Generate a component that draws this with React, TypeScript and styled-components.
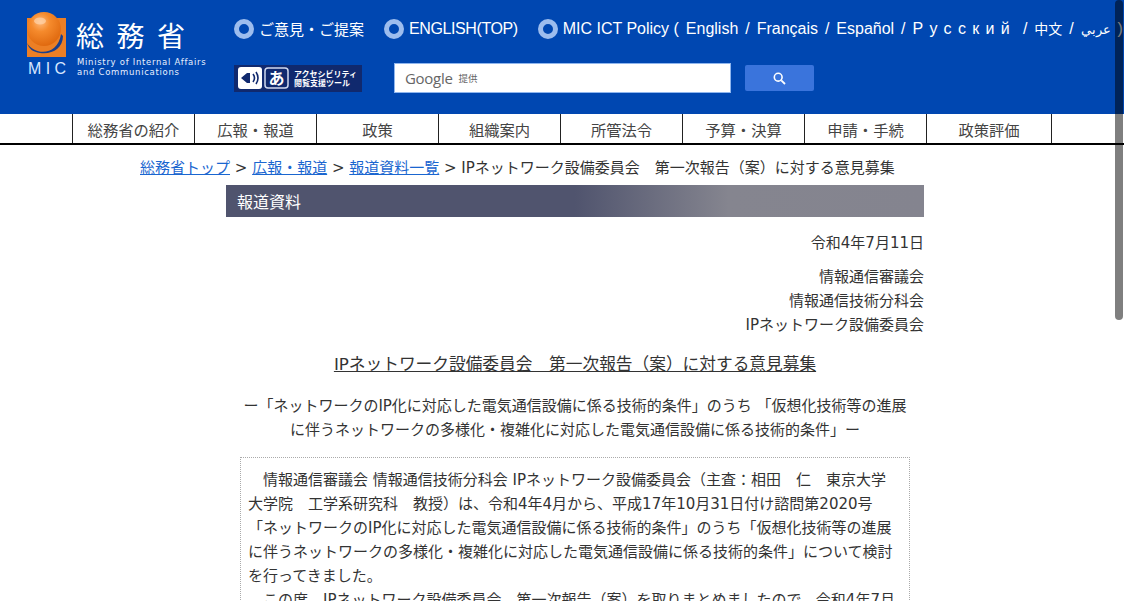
import styled, { createGlobalStyle } from 'styled-components'

const sans = `'Liberation Sans', 'Noto Sans CJK JP', sans-serif`
const jp = `'DejaVu Sans', 'Noto Sans CJK JP', sans-serif`
const jpOnly = `'Noto Sans CJK JP', sans-serif`

const navItems = ['総務省の紹介', '広報・報道', '政策', '組織案内', '所管法令', '予算・決算', '申請・手続', '政策評価']

export default function App() {
	return (
		<>
			<GlobalStyle />
			<Page>
				<Header>
					<LogoBlock>
						<LogoMark>
							<svg width="40" height="46" viewBox="0 0 40 46">
								<defs>
									<radialGradient id="ball" cx="0.4" cy="0.3" r="0.7">
										<stop offset="0" stopColor="#ffb878" />
										<stop offset="0.4" stopColor="#f58a2c" />
										<stop offset="1" stopColor="#e06a10" />
									</radialGradient>
								</defs>
								<rect x="0" y="6" width="39" height="39" fill="#ec7f25" />
								<path d="M0 31 C8 44 31 44 34 22 L36 24 C36 36 25 43 13 41 C6 40 2 37 0 31Z" fill="#1a3f8c" />
								<circle cx="17" cy="17" r="17" fill="url(#ball)" />
								<ellipse cx="13" cy="9" rx="6" ry="3.5" fill="#ffd9b3" opacity="0.65" />
							</svg>
							<MicText>MIC</MicText>
						</LogoMark>
						<LogoText>
							<LogoKanji>総務省</LogoKanji>
							<LogoEnglish>
								Ministry of Internal Affairs
								<br />
								and Communications
							</LogoEnglish>
						</LogoText>
					</LogoBlock>
					<HeaderRight>
						<LinkRow>
							<HeadLink>
								<Ring />
								<JpLink>ご意見・ご提案</JpLink>
							</HeadLink>
							<HeadLink>
								<Ring />
								<Tight>ENGLISH(TOP)</Tight>
							</HeadLink>
							<HeadLink>
								<Ring />
								<Policy>
									MIC ICT Policy{' '}
									<Languages>
										( English / Français / Español / <Spaced>Русский</Spaced> / <Chinese>中文</Chinese> / <Arabic>عربي</Arabic> )
									</Languages>
								</Policy>
							</HeadLink>
						</LinkRow>
						<SearchRow>
							<AccessBadge>
								<svg width="58" height="26" viewBox="0 0 58 26">
									<rect x="4" y="2" width="24" height="22" rx="3" fill="#fff" />
									<path d="M7 13 L13 8 V18 Z M13 8 h3 v10 h-3z" fill="#10296e" />
									<path d="M19 9 Q22 13 19 17 M22 7 Q26 13 22 19" stroke="#10296e" strokeWidth="1.6" fill="none" />
									<rect x="31" y="3" width="23" height="20" rx="3" fill="#10296e" stroke="#cfd9f0" strokeWidth="1.5" />
									<text x="42.5" y="19" textAnchor="middle" fontSize="16" fontWeight="700" fill="#fff" fontFamily={jpOnly}>
										あ
									</text>
								</svg>
								<BadgeText>
									アクセシビリティ
									<br />
									閲覧支援ツール
								</BadgeText>
							</AccessBadge>
							<SearchBox>
								<GoogleWord>Google</GoogleWord>
								<Provided>提供</Provided>
							</SearchBox>
							<SearchButton>
								<svg width="13" height="13" viewBox="0 0 13 13">
									<path d="M8.3 8.3 L12 12" stroke="#fff" strokeWidth="1.8" />
									<circle cx="5.2" cy="5.2" r="3.9" stroke="#fff" strokeWidth="1.6" fill="none" />
								</svg>
							</SearchButton>
						</SearchRow>
					</HeaderRight>
				</Header>
				<Nav>
					{navItems.map((item, i) => (
						<NavItem key={item} wide={i === navItems.length - 1}>
							{item}
						</NavItem>
					))}
				</Nav>
				<Breadcrumb>
					<Crumb>総務省トップ</Crumb> &gt; <Crumb>広報・報道</Crumb> &gt; <Crumb>報道資料一覧</Crumb> &gt; IPネットワーク設備委員会　第一次報告（案）に対する意見募集
				</Breadcrumb>
				<Main>
					<TitleBar>報道資料</TitleBar>
					<DateLine>令和4年7月11日</DateLine>
					<Senders>
						<div>情報通信審議会</div>
						<div>情報通信技術分科会</div>
						<div>IPネットワーク設備委員会</div>
					</Senders>
					<Heading>IPネットワーク設備委員会　第一次報告（案）に対する意見募集</Heading>
					<SubHeading>
						ー「ネットワークのIP化に対応した電気通信設備に係る技術的条件」のうち 「仮想化技術等の進展
						<br />
						に伴うネットワークの多様化・複雑化に対応した電気通信設備に係る技術的条件」ー
					</SubHeading>
					<NoticeBox>
						<Para>
							情報通信審議会 情報通信技術分科会 IPネットワーク設備委員会（主査：相田　仁　東京大学
							<br />
							大学院　工学系研究科　教授）は、令和4年4月から、平成17年10月31日付け諮問第2020号
							<br />
							「ネットワークのIP化に対応した電気通信設備に係る技術的条件」のうち「仮想化技術等の進展
							<br />
							に伴うネットワークの多様化・複雑化に対応した電気通信設備に係る技術的条件」について検討
							<br />
							を行ってきました。
						</Para>
						<Para>この度、IPネットワーク設備委員会　第一次報告（案）を取りまとめましたので、令和4年7月</Para>
					</NoticeBox>
				</Main>
				<ScrollThumb />
			</Page>
		</>
	)
}

const GlobalStyle = createGlobalStyle`
	html, body {
		margin: 0;
		padding: 0;
		background: #fff;
		overflow: hidden;
	}
`

const Page = styled.div`
	position: relative;
	width: 1124px;
	height: 601px;
	overflow: hidden;
	font-family: ${jp};
	font-size: 15px;
	color: #333;
`

const Header = styled.header`
	display: flex;
	height: 114px;
	box-sizing: border-box;
	background: #0047b1;
	color: #fff;
	padding: 12px 0 0 27px;
`

const LogoBlock = styled.div`
	display: flex;
	flex-shrink: 0;
	width: 207px;
	gap: 9px;
`

const LogoMark = styled.div`
	display: flex;
	flex-direction: column;
	width: 40px;
	line-height: 0;
`

const MicText = styled.div`
	font-family: ${sans};
	font-size: 16px;
	line-height: 16px;
	letter-spacing: 4.4px;
	margin: 3px 0 0 1px;
	color: #d6e6ff;
`

const LogoText = styled.div`
	display: flex;
	flex-direction: column;
`

const LogoKanji = styled.div`
	font-family: ${jpOnly};
	font-size: 28px;
	line-height: 38px;
	letter-spacing: 12.5px;
	white-space: nowrap;
	margin-top: 4px;
`

const LogoEnglish = styled.div`
	font-family: 'DejaVu Sans', sans-serif;
	font-size: 8.5px;
	line-height: 10px;
	letter-spacing: 0.7px;
	white-space: nowrap;
	margin: 3px 0 0 1px;
	color: #e8f0ff;
`

const HeaderRight = styled.div`
	display: flex;
	flex-direction: column;
`

const LinkRow = styled.div`
	display: flex;
	gap: 20px;
	height: 34px;
	align-items: center;
	white-space: nowrap;
`

const HeadLink = styled.div`
	display: flex;
	align-items: center;
	gap: 5px;
	font-family: ${sans};
	font-size: 16px;
`

const Ring = styled.span`
	width: 10px;
	height: 10px;
	border: 5px solid #9dbdee;
	border-radius: 50%;
`

const JpLink = styled.span`
	font-family: ${jpOnly};
	font-size: 15px;
	margin-top: -2px;
`

const Tight = styled.span`
	letter-spacing: -0.4px;
`

const Policy = styled.span`
	margin-top: -2px;
`

const Languages = styled.span`
	word-spacing: 2.5px;
`

const Spaced = styled.span`
	letter-spacing: 6.3px;
`

const Chinese = styled.span`
	font-size: 14px;
`

const Arabic = styled.span`
	font-size: 12.5px;
`

const SearchRow = styled.div`
	display: flex;
	align-items: center;
	margin-top: 17px;
`

const AccessBadge = styled.div`
	display: flex;
	align-items: center;
	width: 128px;
	height: 27px;
	background: #10296e;
`

const BadgeText = styled.div`
	font-family: ${jpOnly};
	font-size: 8px;
	line-height: 9px;
	font-weight: 700;
	white-space: nowrap;
	margin-left: 2px;
`

const SearchBox = styled.div`
	display: flex;
	align-items: center;
	gap: 6px;
	box-sizing: border-box;
	width: 337px;
	height: 30px;
	margin-left: 32px;
	padding-left: 10px;
	background: #fff;
	border: 1px solid #8fb6ee;
`

const GoogleWord = styled.span`
	font-family: 'Open Sans', sans-serif;
	font-size: 15px;
	letter-spacing: -0.3px;
	color: #666;
`

const Provided = styled.span`
	font-family: ${jpOnly};
	font-size: 9.5px;
	color: #666;
`

const SearchButton = styled.div`
	display: flex;
	align-items: center;
	justify-content: center;
	width: 69px;
	height: 26px;
	margin-left: 14px;
	background: #3a74dc;
	border-radius: 2px;
`

const Nav = styled.nav`
	display: flex;
	height: 29px;
	padding-left: 72px;
	border-bottom: 2px solid #000;
`

const NavItem = styled.div<{ wide?: boolean }>`
	display: flex;
	align-items: center;
	justify-content: center;
	box-sizing: border-box;
	width: ${({ wide }) => (wide ? '126px' : '122px')};
	border-left: 1px solid #222;
	border-right: ${({ wide }) => (wide ? '1px solid #222' : 'none')};
	font-family: ${jpOnly};
	font-size: 15.3px;
	color: #444;
`

const Breadcrumb = styled.div`
	padding: 12px 0 0 140px;
	height: 28px;
	line-height: 22px;
	white-space: nowrap;
	font-size: 15px;
`

const Crumb = styled.a`
	color: #1a66d0;
	text-decoration: underline;
`

const Main = styled.main`
	width: 698px;
	margin-left: 226px;
`

const TitleBar = styled.div`
	height: 32px;
	line-height: 32px;
	padding-left: 11px;
	font-family: ${jpOnly};
	font-size: 16px;
	color: #fff;
	background: linear-gradient(90deg, #50546e 0%, #50546e 50%, #85858f 72%, #84848f 100%);
`

const DateLine = styled.div`
	text-align: right;
	margin-top: 14px;
	line-height: 24px;
`

const Senders = styled.div`
	text-align: right;
	margin-top: 10px;
	line-height: 24px;
`

const Heading = styled.h1`
	margin: 15px 0 0;
	text-align: center;
	font-size: 16.7px;
	font-weight: 400;
	line-height: 24px;
	text-decoration: underline;
`

const SubHeading = styled.div`
	margin-top: 18px;
	text-align: center;
	line-height: 24px;
	white-space: nowrap;
`

const NoticeBox = styled.div`
	box-sizing: border-box;
	width: 670px;
	margin: 15px 0 0 14px;
	padding: 10px 8px 9px 8px;
	border: 1px dotted #aaa;
`

const Para = styled.p`
	margin: 0 0 0 -1px;
	line-height: 24px;
	text-indent: 15px;
	white-space: nowrap;
`

const ScrollThumb = styled.div`
	position: absolute;
	top: 0;
	right: 1px;
	width: 8px;
	height: 320px;
	border-radius: 4px;
	background: rgba(0, 0, 0, 0.5);
`
